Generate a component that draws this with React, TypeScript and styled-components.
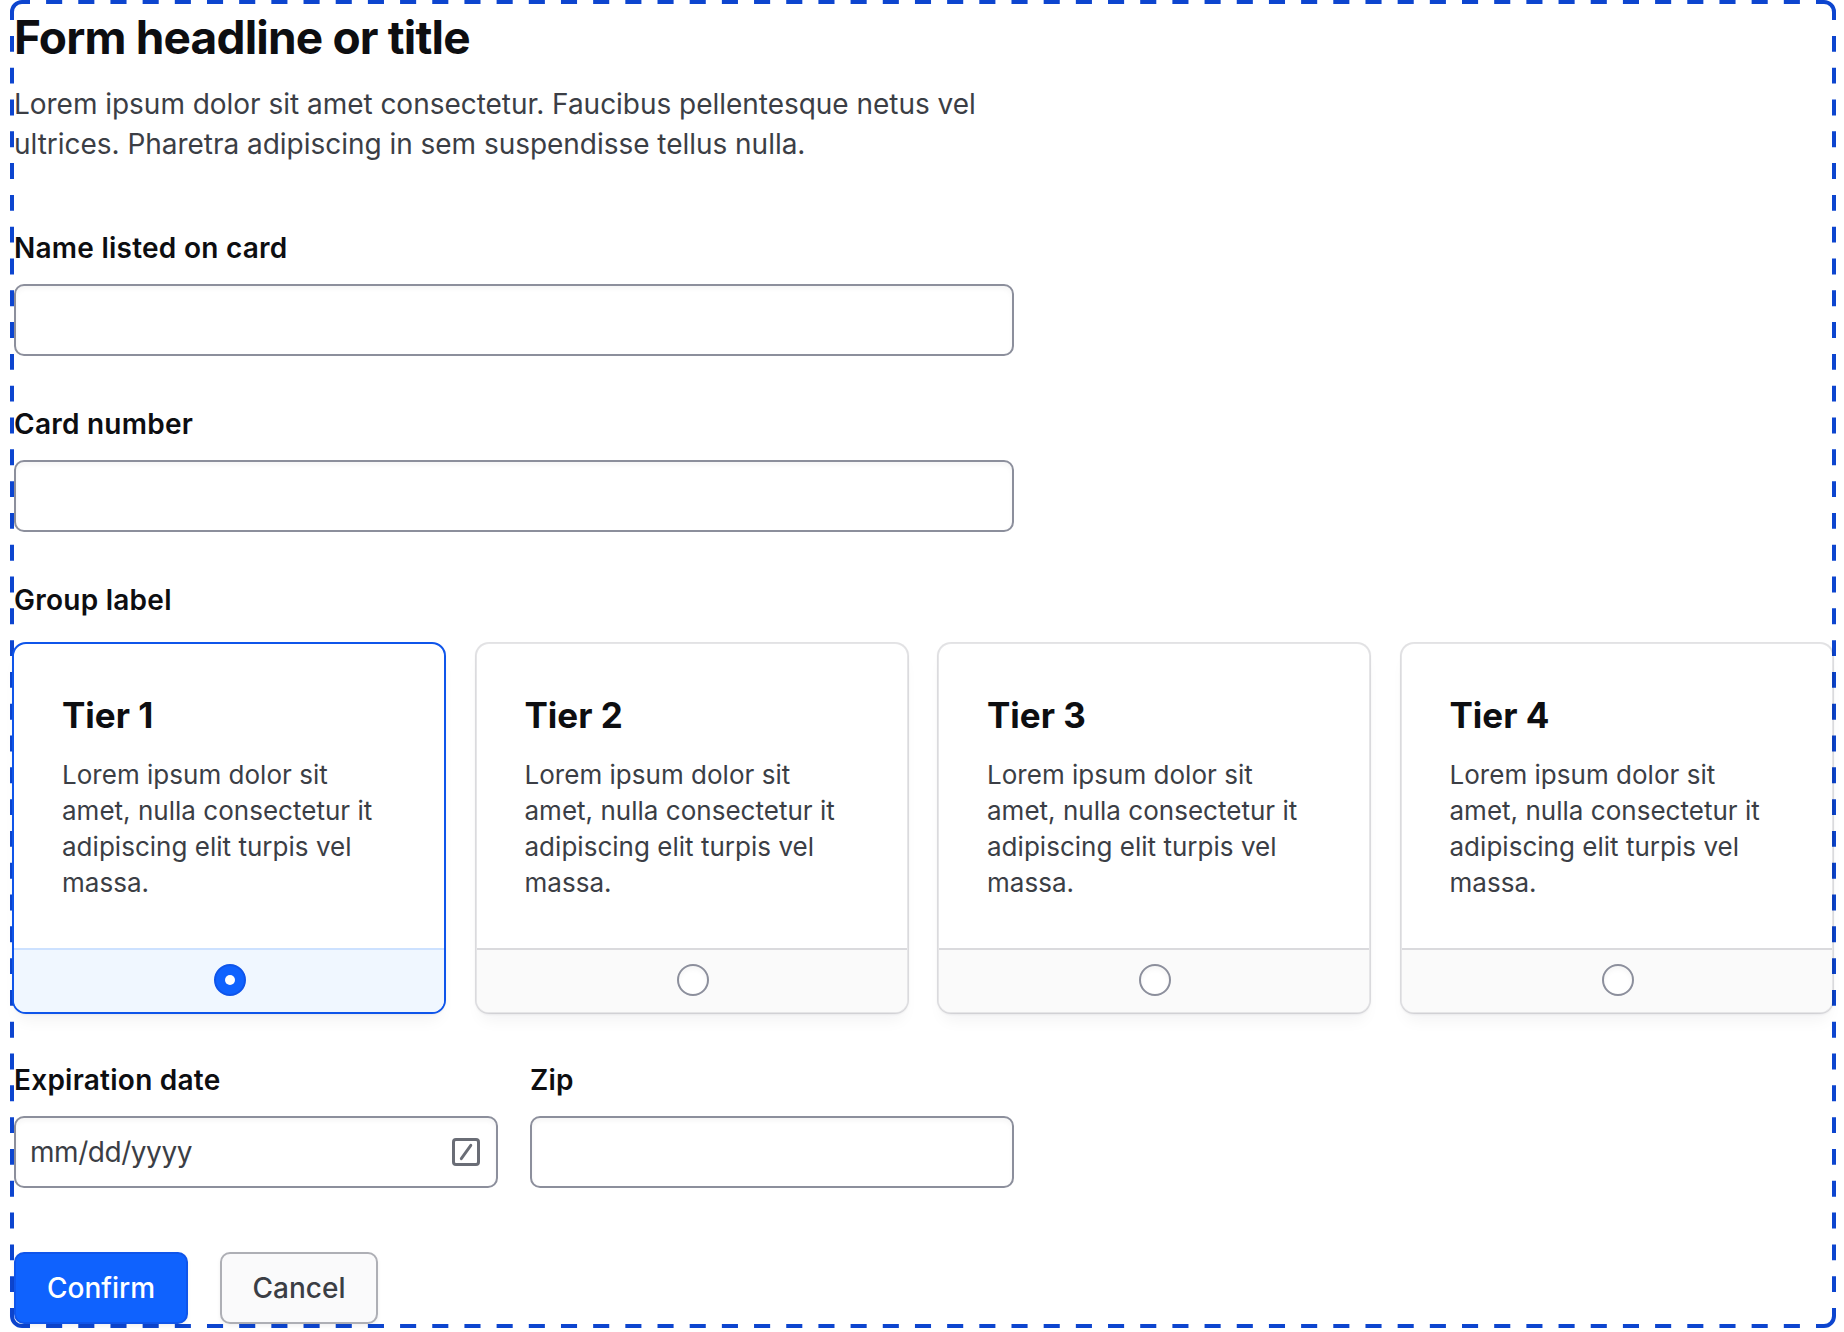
import React from "react";
import styled, { createGlobalStyle } from "styled-components";

const GlobalStyle = createGlobalStyle`
  *, *::before, *::after { box-sizing: border-box; }
  body { margin: 0; background: #fff; font-family: Inter, sans-serif; color: #0d0e11; }
  h1, h2, p { margin: 0; }
`;

const Page = styled.main`
  position: relative;
  width: 1844px;
  height: 1332px;
  overflow: hidden;
  padding: 11px 10px 0 14px;
`;

const FrameOutline = styled.svg`
  position: absolute;
  left: 10px;
  top: 0;
  overflow: visible;
`;

const Form = styled.div`
  position: relative;
  display: flex;
  flex-direction: column;
`;

const Title = styled.h1`
  font-size: 46px;
  line-height: 52px;
  font-weight: 700;
  letter-spacing: -0.82px;
  white-space: nowrap;
`;

const Intro = styled.p`
  margin-top: 21px;
  width: 1000px;
  font-size: 28px;
  line-height: 40px;
  letter-spacing: -0.03px;
  color: #3b3e45;
  white-space: nowrap;
`;

const Field = styled.div<{ $w: number }>`
  width: ${(p) => p.$w}px;
  display: flex;
  flex-direction: column;
`;

const Label = styled.label`
  font-size: 28px;
  line-height: 40px;
  font-weight: 600;
  letter-spacing: 0.25px;
`;

const InputBox = styled.div`
  margin-top: 16px;
  height: 72px;
  padding: 0 16px 0 14px;
  display: flex;
  align-items: center;
  justify-content: space-between;
  border: 2px solid #8c8f9c;
  border-radius: 10px;
  background: #fff;
  box-shadow: inset 0 3px 5px rgba(20, 20, 30, 0.04);
`;

const Placeholder = styled.span`
  font-size: 28px;
  line-height: 40px;
  letter-spacing: -0.45px;
  color: #3b3e45;
`;

const Stack = styled.div`
  margin-top: 64px;
  display: flex;
  flex-direction: column;
  gap: 48px;
`;

const Cards = styled.div`
  margin: 22px 0 -2px -2px;
  display: flex;
  gap: 28.5px;
`;

const Card = styled.div<{ $on: boolean }>`
  width: 434px;
  height: 372px;
  flex: none;
  display: flex;
  flex-direction: column;
  border: 2px solid ${(p) => (p.$on ? "#0f55ea" : "rgba(18, 20, 40, 0.11)")};
  border-radius: 14px;
  background: #fff;
  background-clip: padding-box;
  overflow: hidden;
  box-shadow: 0 1px 2px rgba(10, 12, 30, 0.05), 0 12px 16px -6px rgba(10, 12, 30, 0.05);
`;

const CardBody = styled.div`
  flex: 1;
  padding: 45px 48px 0;
`;

const CardTitle = styled.h2`
  font-size: 35px;
  line-height: 52px;
  font-weight: 700;
  letter-spacing: -0.02px;
`;

const CardText = styled.p`
  margin-top: 16px;
  width: 330px;
  font-size: 26px;
  line-height: 36px;
  letter-spacing: 0.02px;
  color: #3b3e45;
`;

const CardFooter = styled.div<{ $on: boolean }>`
  height: 64px;
  padding: 0 0 2px 2px;
  display: flex;
  align-items: center;
  justify-content: center;
  border-top: 2px solid ${(p) => (p.$on ? "#cce1ff" : "#dadadd")};
  background: ${(p) => (p.$on ? "#f0f7ff" : "#fafafa")};
`;

const Radio = styled.span<{ $on: boolean }>`
  width: 32px;
  height: 32px;
  display: grid;
  place-items: center;
  border-radius: 50%;
  border: 2px solid ${(p) => (p.$on ? "#0f55ea" : "#8c8f9c")};
  background: ${(p) => (p.$on ? "#0f62fe" : "#fff")};
  box-shadow: ${(p) => (p.$on ? "none" : "inset 0 3px 5px rgba(20, 20, 30, 0.04)")};
`;

const Dot = styled.span`
  width: 10px;
  height: 10px;
  border-radius: 50%;
  background: #fff;
`;

const Row = styled.div<{ $gap: number }>`
  display: flex;
  gap: ${(p) => p.$gap}px;
`;

const Actions = styled(Row)`
  margin-top: 16px;
`;

const Button = styled.button<{ $primary?: boolean; $w: number }>`
  width: ${(p) => p.$w}px;
  height: 72px;
  padding: 0;
  font: 500 28px/40px Inter, sans-serif;
  letter-spacing: 0;
  border-radius: 10px;
  border: 2px solid ${(p) => (p.$primary ? "#0f55ea" : "#aeafb5")};
  background: ${(p) => (p.$primary ? "#0f62fe" : "#fafafb")};
  color: ${(p) => (p.$primary ? "#fff" : "#3b3e45")};
  box-shadow: 0 2px 4px rgba(10, 12, 30, 0.06);
`;

const Outline = () => (
  <FrameOutline width="1826" height="1328" fill="none" stroke="#0d45cf" strokeWidth="4">
    <path
      d="M2 20V12A10 10 0 0 1 12 2H20M1806 2H1814A10 10 0 0 1 1824 12V20M1824 1308V1316A10 10 0 0 1 1814 1326H1806M20 1326H12A10 10 0 0 1 2 1316V1308"
    />
    <path d="M20 2H1806M20 1326H1806" strokeDasharray="16.09" strokeDashoffset="16.09" />
    <path d="M2 20V1308M1824 20V1308" strokeDasharray="15.901" strokeDashoffset="15.901" />
  </FrameOutline>
);

const DateIcon = () => (
  <svg width="28" height="28" viewBox="0 0 28 28" fill="none" stroke="#6a6d76" strokeLinecap="round">
    <rect x="1.5" y="1.5" width="25" height="25" rx="2.5" strokeWidth="3" />
    <path d="M18.8 7.3L9.3 20.7" strokeWidth="2.9" />
  </svg>
);

const tiers = ["Tier 1", "Tier 2", "Tier 3", "Tier 4"];

export default function App() {
  return (
    <>
      <GlobalStyle />
      <Page>
        <Outline />
        <Form>
          <Title>Form headline or title</Title>
          <Intro>
            Lorem ipsum dolor sit amet consectetur. Faucibus pellentesque netus vel
            <br />
            ultrices. Pharetra adipiscing in sem suspendisse tellus nulla.
          </Intro>
          <Stack>
            <Field $w={1000}>
              <Label>Name listed on card</Label>
              <InputBox />
            </Field>
            <Field $w={1000}>
              <Label>Card number</Label>
              <InputBox />
            </Field>
            <Field $w={1820}>
              <Label as="div">Group label</Label>
              <Cards>
                {tiers.map((tier, i) => (
                  <Card key={tier} $on={i === 0}>
                    <CardBody>
                      <CardTitle>{tier}</CardTitle>
                      <CardText>
                        Lorem ipsum dolor sit
                        <br />
                        amet, nulla consectetur it
                        <br />
                        adipiscing elit turpis vel
                        <br />
                        massa.
                      </CardText>
                    </CardBody>
                    <CardFooter $on={i === 0}>
                      <Radio $on={i === 0}>{i === 0 && <Dot />}</Radio>
                    </CardFooter>
                  </Card>
                ))}
              </Cards>
            </Field>
            <Row $gap={32}>
              <Field $w={484}>
                <Label>Expiration date</Label>
                <InputBox>
                  <Placeholder>mm/dd/yyyy</Placeholder>
                  <DateIcon />
                </InputBox>
              </Field>
              <Field $w={484}>
                <Label>Zip</Label>
                <InputBox />
              </Field>
            </Row>
            <Actions $gap={32}>
              <Button $primary $w={174}>Confirm</Button>
              <Button $w={158}>Cancel</Button>
            </Actions>
          </Stack>
        </Form>
      </Page>
    </>
  );
}
